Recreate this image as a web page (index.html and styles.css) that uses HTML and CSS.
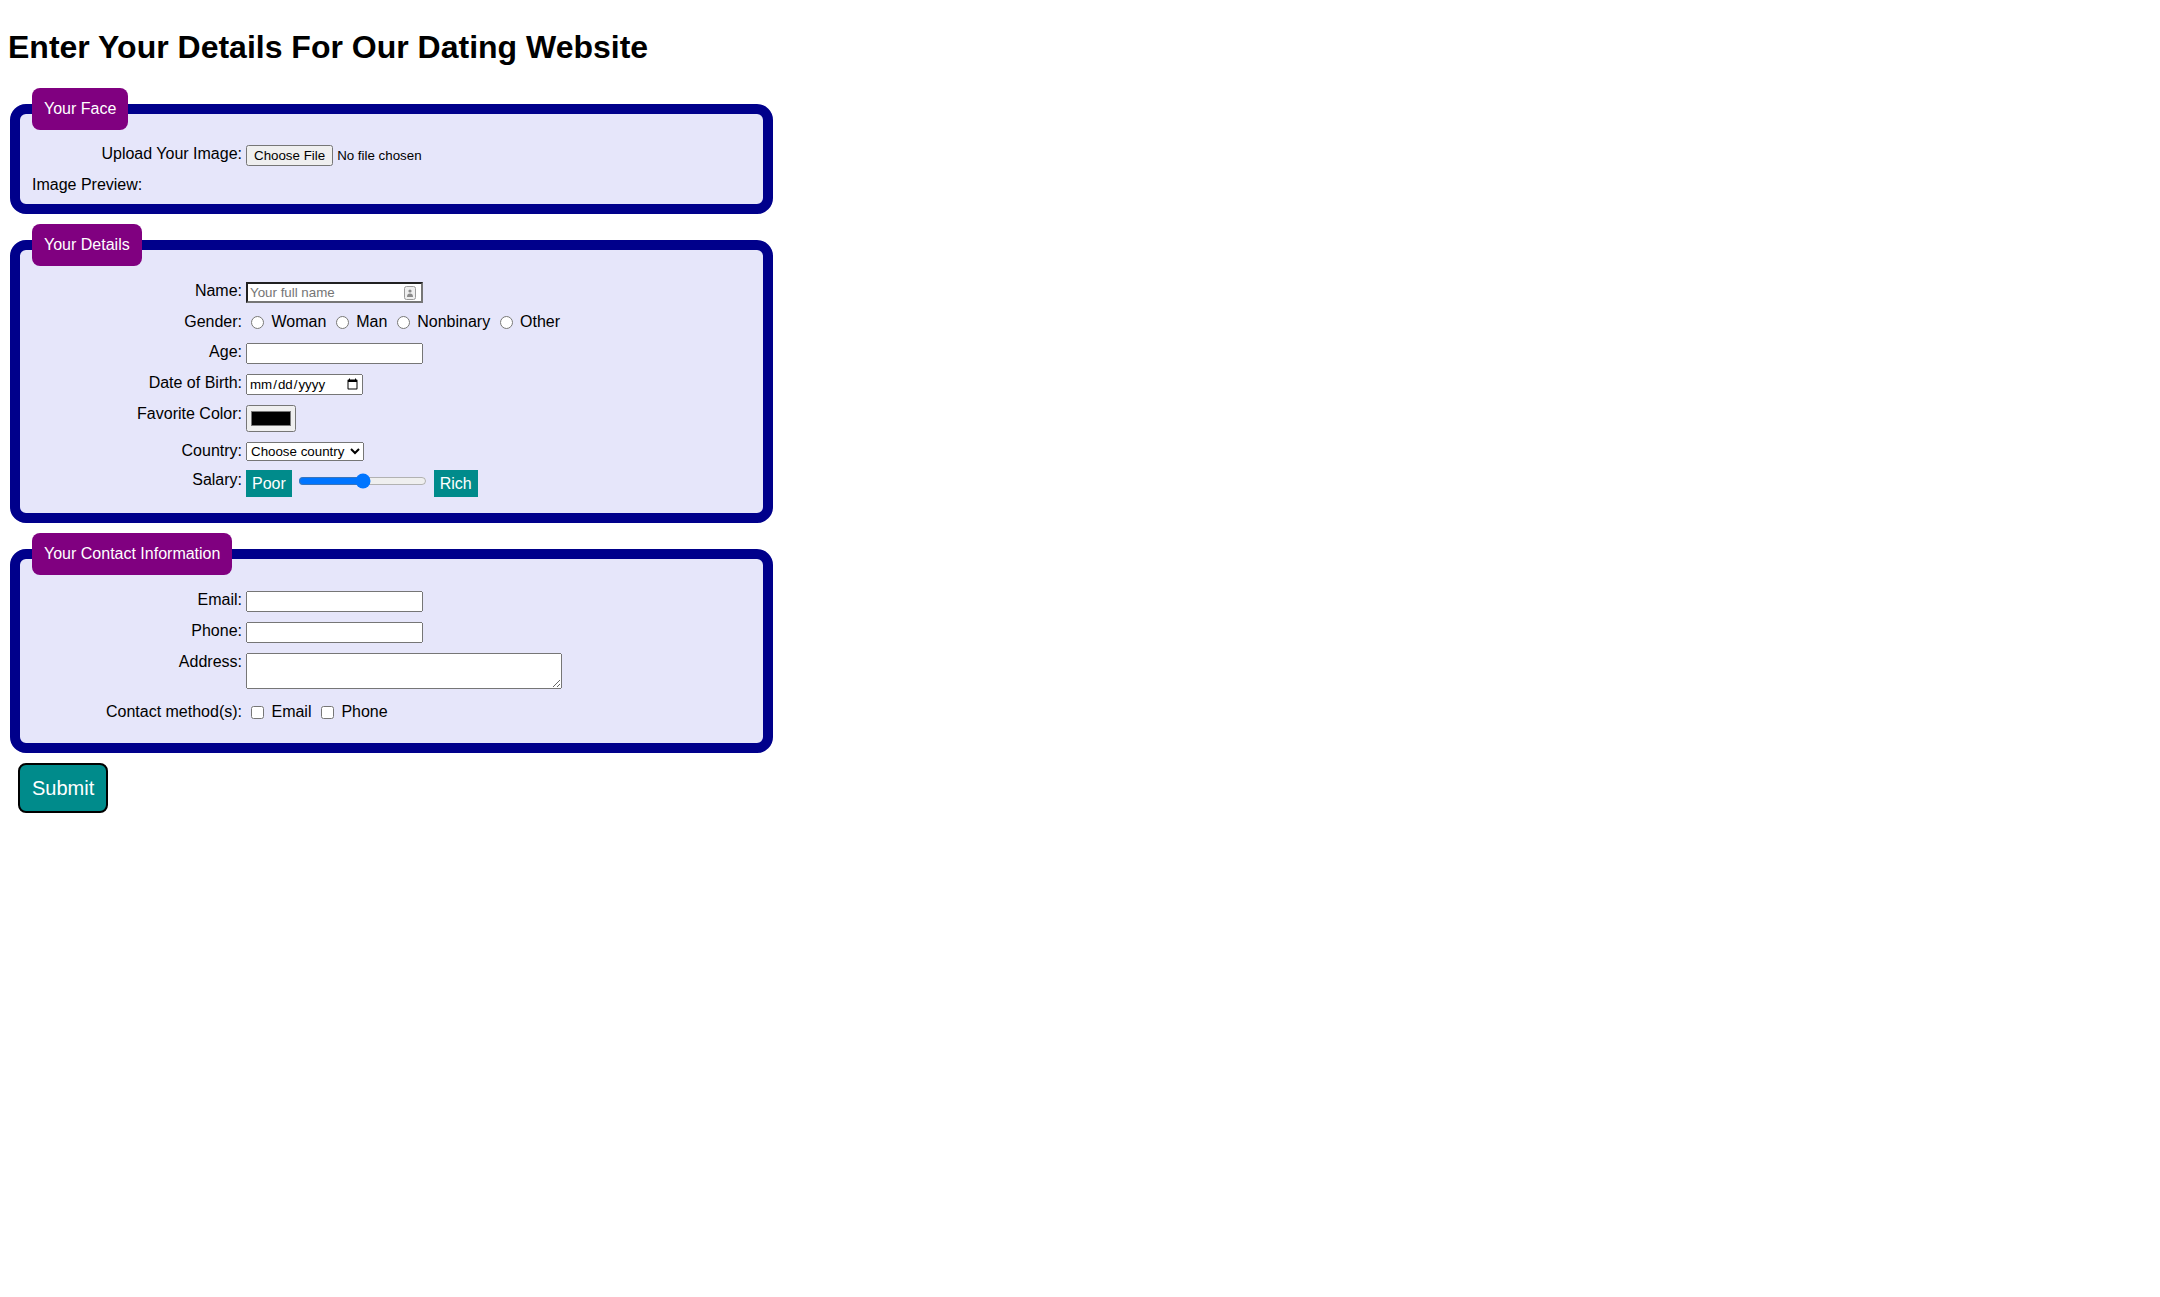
FILE: index.html
```html
<!DOCTYPE html>
<html lang="en">
<head>
<meta charset="utf-8">
<title>Dating Website</title>
<link rel="stylesheet" href="styles.css">
</head>
<body>
<h1 class="title">Enter Your Details For Our Dating Website</h1>
<form class="form">
  <fieldset class="group">
    <legend class="group-title">Your Face</legend>
    <div class="rows">
      <label class="row-label" for="photo">Upload Your Image:</label>
      <div class="row-field"><input type="file" id="photo" class="file"></div>
    </div>
    <div class="preview">Image Preview:</div>
  </fieldset>

  <fieldset class="group">
    <legend class="group-title">Your Details</legend>
    <div class="rows">
      <label class="row-label" for="name">Name:</label>
      <div class="row-field"><span class="name-wrap"><input type="text" id="name" class="text name" placeholder="Your full name"><svg class="name-icon" width="12" height="14" viewBox="0 0 12 14"><rect x="0.5" y="0.5" width="11" height="13" rx="2" fill="#efefef" stroke="#9a9a9a"/><circle cx="6" cy="5" r="1.6" fill="#8a8a8a"/><path d="M3 11 Q3 7.6 6 7.6 Q9 7.6 9 11 Z" fill="#8a8a8a"/></svg></span></div>

      <span class="row-label">Gender:</span>
      <div class="row-field options"><input type="radio" name="gender" id="g1" class="choice"> <label for="g1">Woman</label> <input type="radio" name="gender" id="g2" class="choice"> <label for="g2">Man</label> <input type="radio" name="gender" id="g3" class="choice"> <label for="g3">Nonbinary</label> <input type="radio" name="gender" id="g4" class="choice"> <label for="g4">Other</label></div>

      <label class="row-label" for="age">Age:</label>
      <div class="row-field"><input type="text" id="age" class="text"></div>

      <label class="row-label" for="dob">Date of Birth:</label>
      <div class="row-field"><input type="date" id="dob" class="date"></div>

      <label class="row-label" for="color">Favorite Color:</label>
      <div class="row-field"><input type="color" id="color" class="color" value="#000000"></div>

      <label class="row-label" for="country">Country:</label>
      <div class="row-field"><select id="country" class="select"><option>Choose country</option><option>United States</option><option>Canada</option><option>Other</option></select></div>

      <label class="row-label" for="salary">Salary:</label>
      <div class="row-field"><span class="tag">Poor</span> <input type="range" id="salary" class="range" min="0" max="100" value="50"> <span class="tag">Rich</span></div>
    </div>
  </fieldset>

  <fieldset class="group">
    <legend class="group-title">Your Contact Information</legend>
    <div class="rows">
      <label class="row-label" for="email">Email:</label>
      <div class="row-field"><input type="email" id="email" class="text"></div>

      <label class="row-label" for="phone">Phone:</label>
      <div class="row-field"><input type="tel" id="phone" class="text"></div>

      <label class="row-label" for="address">Address:</label>
      <div class="row-field"><textarea id="address" class="area" rows="2"></textarea></div>

      <span class="row-label">Contact method(s):</span>
      <div class="row-field options options-last"><input type="checkbox" id="c1" class="choice"> <label for="c1">Email</label> <input type="checkbox" id="c2" class="choice"> <label for="c2">Phone</label></div>
    </div>
  </fieldset>

  <button type="submit" class="submit">Submit</button>
</form>
</body>
</html>
```

FILE: styles.css
```css
body {
  margin: 0;
  padding: 8px;
  font-family: "Liberation Sans", Arial, sans-serif;
  font-size: 16px;
  color: #000;
  background: #fff;
}

.title {
  font-size: 32px;
  font-weight: bold;
  margin: 21.44px 0;
}

.form {
  margin: 0;
}

.group {
  box-sizing: border-box;
  width: 763px;
  margin: 10px 2px;
  padding: 5.6px 12px 10px;
  border: 10px solid #00008b;
  border-radius: 16px;
  background: #e6e6fa;
}

.group-title {
  background: #800080;
  color: #fff;
  padding: 12px;
  border-radius: 8px;
}

.rows {
  display: grid;
  grid-template-columns: 210px 1fr;
  column-gap: 4px;
  row-gap: 10px;
  padding: 10px 0;
}

.row-label {
  text-align: right;
}

.row-field {
  min-width: 0;
}

.options {
  padding-bottom: 1.6px;
}

.options-last {
  padding-bottom: 2.6px;
}

input, select, textarea, button {
  font-family: "Liberation Sans", Arial, sans-serif;
}

.file {
  font-size: 13.33px;
}

.text {
  box-sizing: border-box;
  width: 177px;
  height: 21px;
  font-size: 13.33px;
}

.name-wrap {
  position: relative;
  display: inline-block;
}

.name {
  border: 2px inset #767676;
  background: #fff;
  padding: 1px 2px;
  font-family: "Liberation Sans", Arial, sans-serif;
  font-size: 13.33px;
}

.name::placeholder {
  color: #757575;
}

.name-icon {
  position: absolute;
  right: 7px;
  top: 4px;
}

.choice {
  margin: 0 3px 0 5px;
  vertical-align: -2px;
}

.date {
  box-sizing: border-box;
  width: 117px;
  font-size: 13.33px;
}

.color {
  width: 50px;
  height: 27px;
}

.select {
  box-sizing: border-box;
  width: 118px;
  font-size: 13.33px;
}

.tag {
  background: #008b8b;
  color: #fff;
  padding: 5px 6px;
}

.range {
  margin: 2px;
}

.area {
  box-sizing: border-box;
  width: 316px;
  height: 36px;
  vertical-align: baseline;
}

.submit {
  display: block;
  margin: 10px;
  padding: 11.5px 12px;
  font-size: 20px;
  color: #fff;
  background: #008b8b;
  border: 2px solid #000;
  border-radius: 8px;
}
```
